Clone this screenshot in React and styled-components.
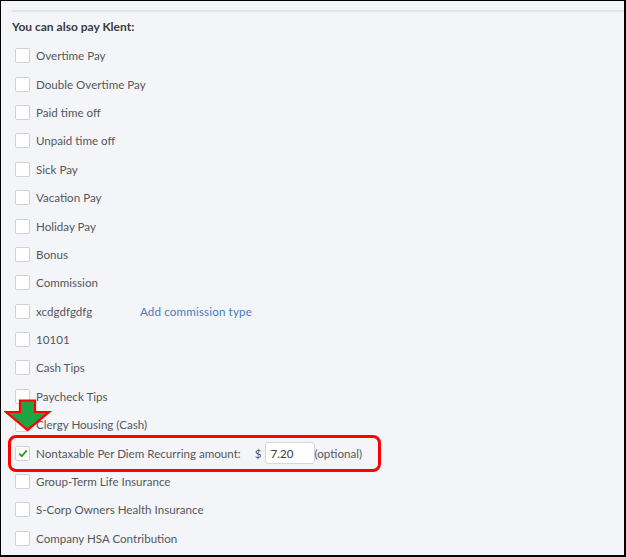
import React from 'react';
import styled, { createGlobalStyle } from 'styled-components';

const GlobalStyle = createGlobalStyle`
  html, body {
    margin: 0;
    padding: 0;
    background: #ffffff;
  }
  body {
    font-family: Lato, "Open Sans", Arial, sans-serif;
  }
`;

const Frame = styled.div`
  box-sizing: border-box;
  width: 626px;
  height: 557px;
  border: 1px solid #000;
  border-right-width: 2px;
  border-bottom-width: 2px;
  background: #f4f5f8;
  padding-top: 9px;
  overflow: hidden;
`;

const Divider = styled.div`
  height: 2px;
  margin-left: 11px;
  background: #e3e4e8;
`;

const Heading = styled.div`
  margin: 7px 0 0 11px;
  height: 16px;
  line-height: 16px;
  font-size: 12px;
  font-weight: 700;
  color: #393a3d;
`;

const List = styled.div`
  display: flex;
  flex-direction: column;
  padding: 6.5px 0 0 14px;
`;

const Row = styled.div`
  position: relative;
  display: flex;
  align-items: center;
  height: 28.4px;
  font-size: 11.6px;
  color: #55575c;
`;

const Box = styled.span`
  box-sizing: border-box;
  flex: none;
  display: flex;
  align-items: center;
  justify-content: center;
  width: 15px;
  height: 15px;
  margin-right: 6px;
  background: #fff;
  border: 1px solid #cfd1d6;
  border-radius: 2px;
`;

const Label = styled.span`
  white-space: nowrap;
  min-width: ${p => p.$min || 0}px;
`;

const Link = styled.span`
  color: #3f80c0;
  white-space: nowrap;
  letter-spacing: 0.15px;
`;

const Highlight = styled.div`
  position: absolute;
  left: -7px;
  top: -4px;
  width: 373px;
  height: 37px;
  box-sizing: border-box;
  border: 3px solid #ff0000;
  border-radius: 8px;
  pointer-events: none;
`;

const Arrow = styled.svg`
  position: absolute;
  left: -11px;
  top: -40px;
`;

const Dollar = styled.span`
  margin: 0 3px 0 14px;
`;

const Amount = styled.span`
  box-sizing: border-box;
  display: flex;
  align-items: center;
  width: 50px;
  height: 22px;
  padding-left: 5px;
  background: #fff;
  border: 1px solid #d4d7dc;
  border-radius: 3px;
  color: #393a3d;
`;

const items = [
  'Overtime Pay',
  'Double Overtime Pay',
  'Paid time off',
  'Unpaid time off',
  'Sick Pay',
  'Vacation Pay',
  'Holiday Pay',
  'Bonus',
  'Commission',
  'xcdgdfgdfg',
  '10101',
  'Cash Tips',
  'Paycheck Tips',
  'Clergy Housing (Cash)',
];

const tail = ['Group-Term Life Insurance', 'S-Corp Owners Health Insurance', 'Company HSA Contribution'];

const Check = () => (
  <svg width="10" height="9" viewBox="0 0 10 9">
    <path d="M1.2 4.6 L3.8 7.2 L8.8 1.4" fill="none" stroke="#2ca01c" strokeWidth="1.8" />
  </svg>
);

export default function App() {
  return (
    <>
      <GlobalStyle />
      <Frame>
        <Divider />
        <Heading>You can also pay Klent:</Heading>
        <List>
          {items.map(name => (
            <Row key={name}>
              <Box />
              {name === 'xcdgdfgdfg' ? (
                <>
                  <Label $min={104}>{name}</Label>
                  <Link>Add commission type</Link>
                </>
              ) : (
                <Label>{name}</Label>
              )}
            </Row>
          ))}
          <Row>
            <Highlight />
            <Arrow width="48" height="33" viewBox="0 0 48 33">
              <path
                d="M16 1.5 H31 V13 H45 L23.5 31 L2 13 H16 Z"
                fill="#1ea442"
                stroke="#ff0000"
                strokeWidth="2.2"
                strokeLinejoin="miter"
              />
            </Arrow>
            <Box>
              <Check />
            </Box>
            <Label>Nontaxable Per Diem</Label>
            <Label style={{ marginLeft: 3 }}>Recurring amount:</Label>
            <Dollar>$</Dollar>
            <Amount>7.20</Amount>
            <Label>(optional)</Label>
          </Row>
          {tail.map(name => (
            <Row key={name}>
              <Box />
              <Label>{name}</Label>
            </Row>
          ))}
        </List>
      </Frame>
    </>
  );
}
